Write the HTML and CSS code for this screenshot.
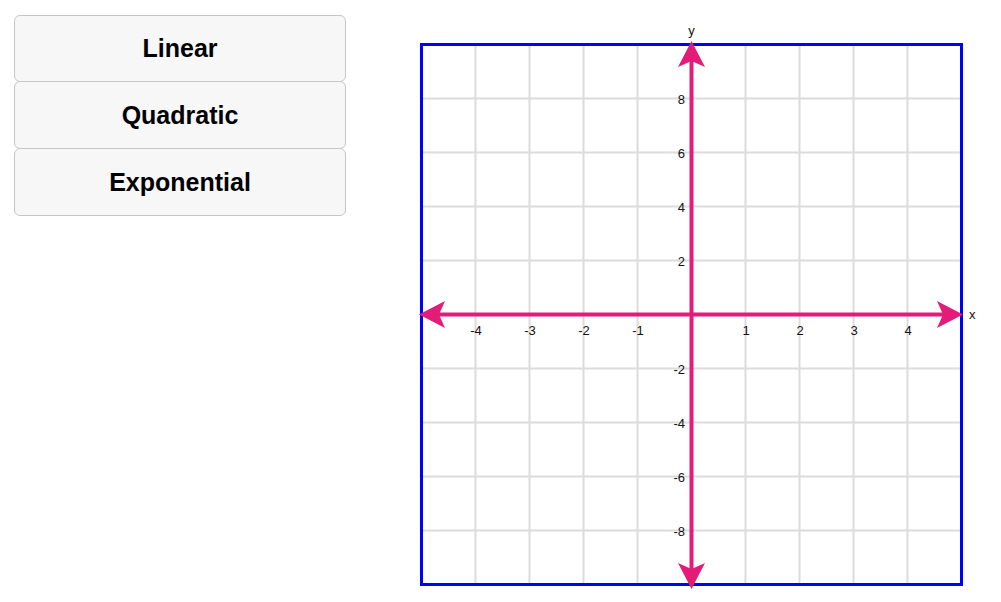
FILE: index.html
```html
<!DOCTYPE html>
<html>
<head>
<meta charset="utf-8">
<link rel="stylesheet" href="styles.css">
</head>
<body>
<div class="app">
  <div class="buttons">
    <button class="btn">Linear</button>
    <button class="btn">Quadratic</button>
    <button class="btn">Exponential</button>
  </div>
  <svg class="graph" width="600" height="587" viewBox="0 0 600 587">
    <g class="grid">
      <line x1="75.5" y1="29.5" x2="75.5" y2="569.5"/>
      <line x1="129.5" y1="29.5" x2="129.5" y2="569.5"/>
      <line x1="183.5" y1="29.5" x2="183.5" y2="569.5"/>
      <line x1="237.5" y1="29.5" x2="237.5" y2="569.5"/>
      <line x1="345.5" y1="29.5" x2="345.5" y2="569.5"/>
      <line x1="399.5" y1="29.5" x2="399.5" y2="569.5"/>
      <line x1="453.5" y1="29.5" x2="453.5" y2="569.5"/>
      <line x1="507.5" y1="29.5" x2="507.5" y2="569.5"/>
      <line x1="21.5" y1="83.5" x2="561.5" y2="83.5"/>
      <line x1="21.5" y1="137.5" x2="561.5" y2="137.5"/>
      <line x1="21.5" y1="191.5" x2="561.5" y2="191.5"/>
      <line x1="21.5" y1="245.5" x2="561.5" y2="245.5"/>
      <line x1="21.5" y1="353.5" x2="561.5" y2="353.5"/>
      <line x1="21.5" y1="407.5" x2="561.5" y2="407.5"/>
      <line x1="21.5" y1="461.5" x2="561.5" y2="461.5"/>
      <line x1="21.5" y1="515.5" x2="561.5" y2="515.5"/>
    </g>
    <rect class="frame" x="21.5" y="29.5" width="540" height="540"/>
    <g class="axes">
      <line x1="30" y1="299.5" x2="552" y2="299.5"/>
      <line x1="291.5" y1="37" x2="291.5" y2="562"/>
      <path class="head" d="M19 299.5 L45 286 L39 299.5 L45 313 Z"/>
      <path class="head" d="M563 299.5 L537 286 L543 299.5 L537 313 Z"/>
      <path class="head" d="M291.5 26 L278 52 L291.5 46 L305 52 Z"/>
      <path class="head" d="M291.5 574 L278 548 L291.5 554 L305 548 Z"/>
    </g>
    <g class="labels">
      <text x="291.5" y="20" text-anchor="middle">y</text>
      <text x="569" y="304">x</text>
      <text x="76" y="320" text-anchor="middle">-4</text>
      <text x="130" y="320" text-anchor="middle">-3</text>
      <text x="184" y="320" text-anchor="middle">-2</text>
      <text x="238" y="320" text-anchor="middle">-1</text>
      <text x="346" y="320" text-anchor="middle">1</text>
      <text x="400" y="320" text-anchor="middle">2</text>
      <text x="454" y="320" text-anchor="middle">3</text>
      <text x="508" y="320" text-anchor="middle">4</text>
      <text x="285" y="88.5" text-anchor="end">8</text>
      <text x="285" y="142.5" text-anchor="end">6</text>
      <text x="285" y="196.5" text-anchor="end">4</text>
      <text x="285" y="250.5" text-anchor="end">2</text>
      <text x="285" y="358.5" text-anchor="end">-2</text>
      <text x="285" y="412.5" text-anchor="end">-4</text>
      <text x="285" y="466.5" text-anchor="end">-6</text>
      <text x="285" y="520.5" text-anchor="end">-8</text>
    </g>
  </svg>
</div>
</body>
</html>
```
FILE: styles.css
```css
html, body {
  margin: 0;
  padding: 0;
  background: #ffffff;
  font-family: "Liberation Sans", Arial, sans-serif;
}
.app {
  display: flex;
  align-items: flex-start;
  padding: 15px 0 0 14px;
}
.buttons {
  display: flex;
  flex-direction: column;
  width: 332px;
}
.btn {
  height: 68px;
  margin: 0;
  margin-top: -1px;
  padding: 0;
  border: 1px solid #c6c6c6;
  border-radius: 6px;
  background: #f7f7f7;
  color: #000;
  font-family: "Liberation Sans", Arial, sans-serif;
  font-weight: bold;
  font-size: 25px;
  text-align: center;
}
.btn:first-child {
  margin-top: 0;
  height: 67px;
}
.graph {
  display: block;
  margin-left: 54px;
  margin-top: 0;
}
.grid line {
  stroke: #dcdcdc;
  stroke-width: 2;
}
.frame {
  fill: none;
  stroke: #0000ff;
  stroke-width: 3;
}
.axes line {
  stroke: #e31c79;
  stroke-width: 4;
}
.axes .head {
  fill: #e31c79;
  stroke: none;
}
.labels text {
  font-family: "Liberation Sans", Arial, sans-serif;
  font-size: 13px;
  fill: #111;
}
```
